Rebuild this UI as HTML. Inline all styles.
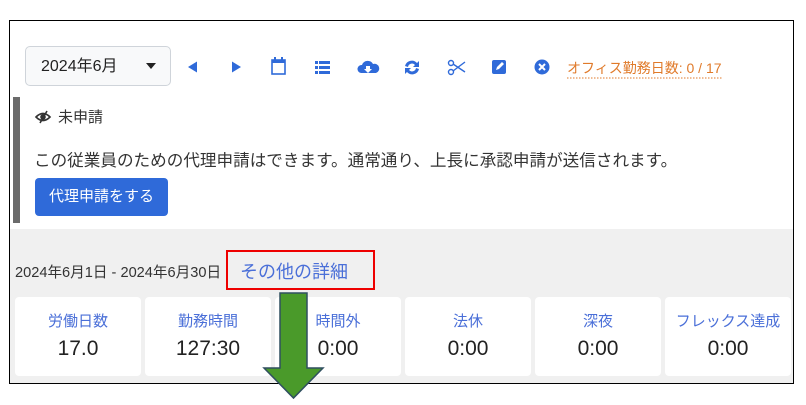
<!DOCTYPE html>
<html><head><meta charset="utf-8"><style>
body{margin:0;width:806px;height:405px;background:#fff;position:relative;overflow:hidden;font-family:"Liberation Sans","Noto Sans CJK JP",sans-serif;}
.frame{position:absolute;left:9px;top:20px;width:783px;height:362px;border:1.5px solid #000;background:#fff;overflow:hidden}
.abs{position:absolute}
.sel{left:15px;top:25px;width:146px;height:40px;border:1px solid #cfd4da;border-radius:5px;background:#f8f9fa;font-size:16px;color:#222;line-height:40px;padding-left:15px;box-sizing:border-box}
.sel:after{content:"";position:absolute;right:14px;top:16px;border:5px solid transparent;border-top:6px solid #222}
.gray{left:0;top:208px;width:783px;height:160px;background:#f0f0f0}
.card{top:276px;width:126px;height:79px;background:#fff;border-radius:4px;text-align:center}
.card .t{margin-top:15px;font-size:15px;color:#4a6fd8;line-height:19px}
.card .v{margin-top:5px;font-size:21px;color:#222;line-height:26px}
</style></head><body>
<div class="frame">
 <div class="abs sel">2024年6月</div>
 <svg class="abs" style="left:0;top:0" width="783" height="120">
  <g fill="#2f6ad9">
   <polygon points="178,46 187,40.5 187,51.5"/>
   <polygon points="222,40.5 231,46 222,51.5"/>
   <rect x="262" y="39" width="13" height="14" fill="none" stroke="#2f6ad9" stroke-width="1.6"/><rect x="262" y="39" width="13" height="3"/><rect x="264" y="36" width="2" height="4"/><rect x="271" y="36" width="2" height="4"/>
   <rect x="305" y="40" width="3" height="3"/><rect x="309" y="40" width="11" height="3"/><rect x="305" y="45" width="3" height="3"/><rect x="309" y="45" width="11" height="3"/><rect x="305" y="50" width="3" height="3"/><rect x="309" y="50" width="11" height="3"/>
   <path d="M351 52 a4 4 0 0 1 1-8 a6 6 0 0 1 11-1 a4 4 0 0 1 3 9z"/><path d="M356 45 h4 v3 h2 l-4 4 l-4-4 h2z" fill="#fff"/>
   <path d="M395 45 a7 7 0 0 1 12-3 l2-2 v6 h-6 l2-2 a4 4 0 0 0-7 2z M409 48 a7 7 0 0 1-12 3 l-2 2 v-6 h6 l-2 2 a4 4 0 0 0 7-2z"/>
   <g fill="none" stroke="#2f6ad9" stroke-width="1.4"><circle cx="441" cy="42" r="2.5"/><circle cx="441" cy="51" r="2.5"/><path d="M443 43 L455 51 M443 50 L455 41"/></g>
   <rect x="482" y="39" width="14" height="14" rx="2"/><path d="M486 49 l1-3 5-5 2 2-5 5z" fill="#fff"/>
   <circle cx="532" cy="46" r="7.5"/><path d="M529 43 l6 6 M535 43 l-6 6" stroke="#fff" stroke-width="2"/>
  </g>
  <text x="557" y="52" font-size="14" fill="#e07a2a" font-family="Liberation Sans,Noto Sans CJK JP,sans-serif">オフィス勤務日数: 0 / 17</text>
  <line x1="557" y1="57" x2="713" y2="57" stroke="#e07a2a" stroke-dasharray="1.5,1.5"/>
  <g transform="translate(25,90)" fill="none" stroke="#333" stroke-width="1.6">
   <path d="M1 6 Q8 -1 15 6 Q8 13 1 6z"/><circle cx="8" cy="6" r="2" fill="#333"/><path d="M12 0 L5 12"/>
  </g>
 </svg>
 <div class="abs" style="left:3px;top:76px;width:7px;height:126px;background:#6b6b6b;z-index:5"></div>
 <div class="abs" style="left:48px;top:85px;font-size:15px;color:#333">未申請</div>
 <div class="abs" style="left:24px;top:126px;font-size:16.6px;color:#333;white-space:nowrap">この従業員のための代理申請はできます。通常通り、上長に承認申請が送信されます。</div>
 <div class="abs" style="left:25px;top:157px;width:133px;height:38px;background:#2f6ad9;border-radius:4px;color:#fff;font-size:15px;line-height:38px;text-align:center">代理申請をする</div>
 <div class="abs gray"></div>
 <div class="abs" style="left:5px;top:240px;font-size:14.6px;color:#333;white-space:nowrap">2024年6月1日 - 2024年6月30日</div>
 <div class="abs" style="left:216px;top:229px;width:149px;height:40px;border:2.5px solid #e00;font-size:18px;color:#4a6fd8;line-height:40px;padding-left:12px;box-sizing:border-box">その他の詳細</div>
 <div class="abs card" style="left:5px"><div class="t">労働日数</div><div class="v">17.0</div></div>
 <div class="abs card" style="left:135px"><div class="t">勤務時間</div><div class="v">127:30</div></div>
 <div class="abs card" style="left:265px"><div class="t">時間外</div><div class="v">0:00</div></div>
 <div class="abs card" style="left:395px"><div class="t">法休</div><div class="v">0:00</div></div>
 <div class="abs card" style="left:525px"><div class="t">深夜</div><div class="v">0:00</div></div>
 <div class="abs card" style="left:655px"><div class="t">フレックス達成</div><div class="v">0:00</div></div>
</div>
<svg class="abs" style="left:0;top:0" width="806" height="405">
 <polygon points="280,293 307,293 307,368 323,368 293.5,398 264,368 280,368" fill="#4a9a2a" stroke="#2f4f5f" stroke-width="1.5"/>
</svg>
</body></html>
